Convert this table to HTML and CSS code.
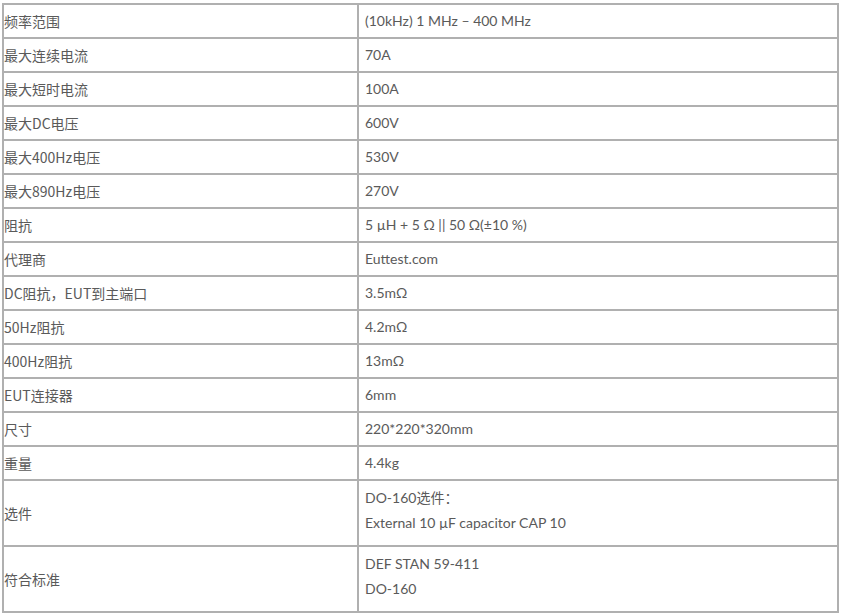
FILE: index.html
```html
<!DOCTYPE html>
<html lang="zh">
<head>
<meta charset="utf-8">
<title>规格</title>
<link rel="stylesheet" href="styles.css">
</head>
<body>
<table class="spec">
  <tbody>
    <tr><td class="k">频率范围</td><td class="v">(10kHz) 1 MHz – 400 MHz</td></tr>
    <tr><td class="k">最大连续电流</td><td class="v">70A</td></tr>
    <tr><td class="k">最大短时电流</td><td class="v">100A</td></tr>
    <tr><td class="k">最大DC电压</td><td class="v">600V</td></tr>
    <tr><td class="k">最大400Hz电压</td><td class="v">530V</td></tr>
    <tr><td class="k">最大890Hz电压</td><td class="v">270V</td></tr>
    <tr><td class="k">阻抗</td><td class="v">5 µH + 5 Ω || 50 Ω(±10 %)</td></tr>
    <tr><td class="k">代理商</td><td class="v">Euttest.com</td></tr>
    <tr><td class="k">DC阻抗，EUT到主端口</td><td class="v">3.5mΩ</td></tr>
    <tr><td class="k">50Hz阻抗</td><td class="v">4.2mΩ</td></tr>
    <tr><td class="k">400Hz阻抗</td><td class="v">13mΩ</td></tr>
    <tr><td class="k">EUT连接器</td><td class="v">6mm</td></tr>
    <tr><td class="k">尺寸</td><td class="v">220*220*320mm</td></tr>
    <tr><td class="k">重量</td><td class="v">4.4kg</td></tr>
    <tr><td class="k">选件</td><td class="v multi"><p>DO-160选件：</p><p>External 10 µF capacitor CAP 10</p></td></tr>
    <tr><td class="k">符合标准</td><td class="v multi"><p>DEF STAN 59-411</p><p>DO-160</p></td></tr>
  </tbody>
</table>
</body>
</html>
```

FILE: styles.css
```css
html, body {
  margin: 0;
  padding: 0;
  background: #ffffff;
}
body {
  padding: 3px 0 0 2px;
}
.spec {
  border-collapse: collapse;
  width: 837px;
  table-layout: fixed;
  color: #5a5a5a;
  font-size: 14px;
}
.spec td {
  border: 2px solid #b0b0b0;
  vertical-align: middle;
}
.spec .k {
  width: 353px;
  height: 32px;
  padding: 0;
  font-family: "Noto Sans CJK SC", "Microsoft YaHei", sans-serif;
  line-height: 26px;
}
.spec .v {
  height: 32px;
  padding: 0 6px;
  font-family: Lato, "Noto Sans CJK SC", sans-serif;
  line-height: 26px;
}
.spec .v.multi {
  height: 50px;
  padding: 4px 6px 10px;
}
.spec p {
  margin: 0;
  line-height: 25px;
}
```
